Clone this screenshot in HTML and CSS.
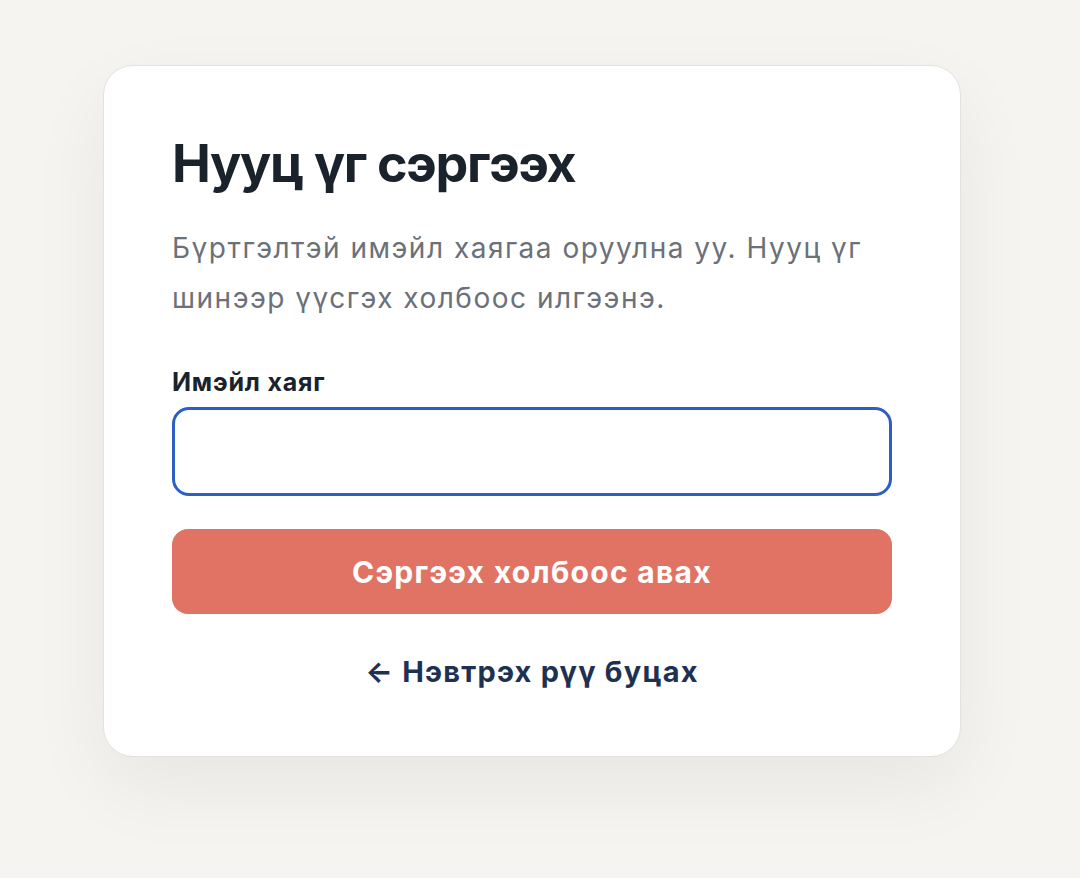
FILE: index.html
```html
<!DOCTYPE html>
<html lang="mn">
<head>
  <meta charset="UTF-8" />
  <meta name="viewport" content="width=device-width, initial-scale=1.0"/>
  <title>Нууц үг сэргээх</title>
  <link rel="stylesheet" href="styles.css">
</head>
<body>
  <div class="card">
    <h1>Нууц үг сэргээх</h1>
    <p class="lead">Бүртгэлтэй имэйл хаягаа оруулна уу. Нууц үг шинээр үүсгэх холбоос илгээнэ.</p>

    <form class="reset-form">
      <label for="email">Имэйл хаяг</label>
      <input type="email" id="email" />
      <button type="submit" class="btn-submit">Сэргээх холбоос авах</button>
    </form>

    <a href="#" class="back-link">← Нэвтрэх рүү буцах</a>
  </div>
</body>
</html>
```

FILE: styles.css
```css
:root {
  --ink: #1a222c;
  --muted: #6b7079;
  --accent: #e07363;
  --focus: #2a60c6;
  --navy: #1f3150;
  --bg-color: #f5f4f0;
}

* {
  box-sizing: border-box;
}

html {
  background: var(--bg-color);
}

body {
  font-family: Inter, 'Noto Sans', sans-serif;
  background: var(--bg-color);
  margin: 0;
  min-height: 100vh;
  padding: 65px 0 0 103px;
}

.card {
  width: 858px;
  background: #fff;
  border: 1px solid #e3e2dd;
  border-radius: 30px;
  padding: 72px 68px 67px;
  box-shadow: 0 30px 80px rgba(0,0,0,0.06);
}

h1 {
  font-size: 52px;
  line-height: 52px;
  font-weight: 700;
  color: var(--ink);
  margin: 0 0 33px;
  letter-spacing: -1.3px;
}

.lead {
  font-size: 28px;
  line-height: 50px;
  letter-spacing: 1.5px;
  color: var(--muted);
  margin: 0 0 44px;
}

.reset-form {
  display: flex;
  flex-direction: column;
}

label {
  font-size: 25px;
  line-height: 30px;
  font-weight: 700;
  letter-spacing: 0.8px;
  color: var(--ink);
  margin-bottom: 10px;
}

input {
  height: 89px;
  border: 3px solid var(--focus);
  border-radius: 17px;
  padding: 0 20px;
  font-family: inherit;
  font-size: 26px;
  outline: none;
}

.btn-submit {
  margin-top: 33px;
  height: 85px;
  border: none;
  border-radius: 16px;
  background: var(--accent);
  color: #fff;
  font-family: inherit;
  font-size: 30px;
  font-weight: 700;
  letter-spacing: 1.3px;
  cursor: pointer;
}

.back-link {
  display: block;
  margin-top: 41px;
  text-align: center;
  font-size: 29px;
  line-height: 34px;
  font-weight: 700;
  letter-spacing: 1.2px;
  color: var(--navy);
  text-decoration: none;
}
```
